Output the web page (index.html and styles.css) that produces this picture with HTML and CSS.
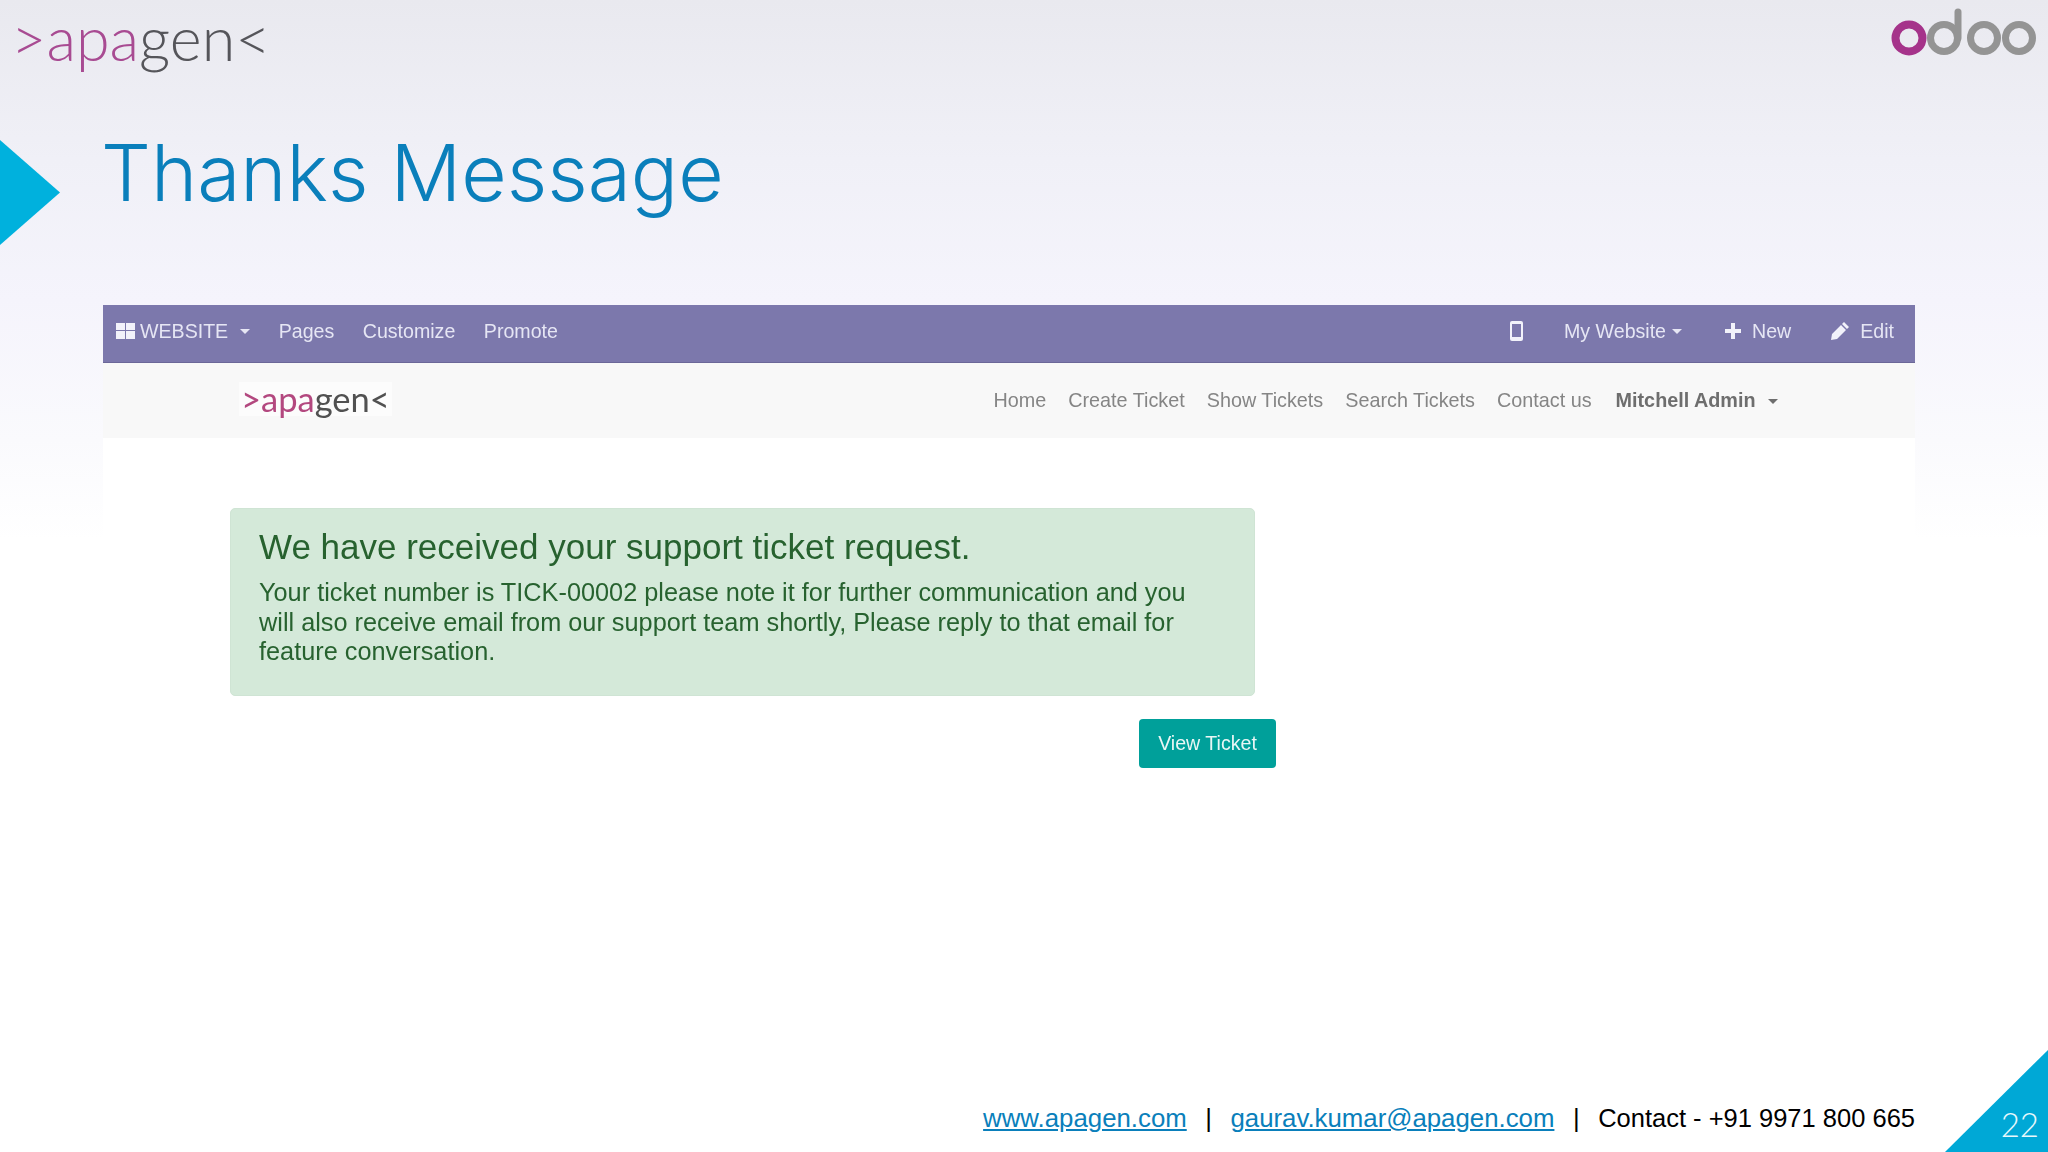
FILE: index.html
```html
<!DOCTYPE html>
<html lang="en">
<head>
  <meta charset="UTF-8" />
  <title>Thanks Message</title>
  <link rel="stylesheet" href="styles.css">
</head>
<body>

  <div class="slide">
    <div class="arrow"></div>

    <div class="top-row">
      <div class="apagen-logo"><span class="pink">&gt;apa</span>gen&lt;</div>
      <svg class="odoo-logo" width="150" height="50" viewBox="0 0 150 50">
        <circle cx="18" cy="30" r="13.5" fill="none" stroke="#a5338a" stroke-width="8" />
        <circle cx="53" cy="30" r="13.5" fill="none" stroke="#949494" stroke-width="7" />
        <line x1="67" y1="4" x2="67" y2="30" stroke="#949494" stroke-width="7" stroke-linecap="round" />
        <circle cx="93" cy="30" r="13.5" fill="none" stroke="#949494" stroke-width="7" />
        <circle cx="128" cy="30" r="13.5" fill="none" stroke="#949494" stroke-width="7" />
      </svg>
    </div>

    <h1 class="slide-title">Thanks Message</h1>

    <div class="screenshot">
      <div class="edit-bar">
        <div class="bar-left">
          <span class="bar-item brand">
            <svg width="19" height="16" viewBox="0 0 19 16"><path d="M0 0h9v7H0zM10 0h9v7h-9zM0 8h9v8H0zM10 8h9v8h-9z" fill="#f2f2fa" /></svg>
            <span>WEBSITE</span>
            <i class="caret"></i>
          </span>
          <span class="bar-item">Pages</span>
          <span class="bar-item">Customize</span>
          <span class="bar-item">Promote</span>
        </div>
        <div class="bar-right">
          <svg class="mobile-icon" width="13" height="20" viewBox="0 0 13 20"><path fill-rule="evenodd" d="M2 0h9a2 2 0 0 1 2 2v16a2 2 0 0 1-2 2H2a2 2 0 0 1-2-2V2a2 2 0 0 1 2-2zM2 3v13h9V3z" fill="#f2f2fa" /></svg>
          <span class="bar-item site">
            <span>My Website</span>
            <i class="caret"></i>
          </span>
          <span class="bar-item new">
            <svg width="16" height="16" viewBox="0 0 16 16"><path d="M6 0h4v6h6v4h-6v6H6v-6H0V6h6z" fill="#f2f2fa" /></svg>
            <span>New</span>
          </span>
          <span class="bar-item edit">
            <svg width="18" height="18" viewBox="0 0 18 18"><path d="M13 0l5 5-2 2-5-5zM10 3l5 5-9 9-6 1 1-6z" fill="#f2f2fa" /></svg>
            <span>Edit</span>
          </span>
        </div>
      </div>

      <div class="site-nav">
        <div class="site-logo"><span class="pink">&gt;apa</span>gen&lt;</div>
        <div class="nav-links">
          <a>Home</a>
          <a>Create Ticket</a>
          <a>Show Tickets</a>
          <a>Search Tickets</a>
          <a>Contact us</a>
          <a class="user">Mitchell Admin <i class="caret"></i></a>
        </div>
      </div>

      <div class="page-body">
        <div class="alert-box">
          <h2>We have received your support ticket request.</h2>
          <p>Your ticket number is TICK-00002 please note it for further communication and you will also receive email from our support team shortly, Please reply to that email for feature conversation.</p>
        </div>
        <div class="btn-row">
          <button class="view-btn">View Ticket</button>
        </div>
      </div>
    </div>

    <div class="contact-row">
      <a>www.apagen.com</a>
      <span class="sep">|</span>
      <a>gaurav.kumar@apagen.com</a>
      <span class="sep">|</span>
      <span class="phone">Contact - +91 9971 800 665</span>
    </div>

    <div class="corner"></div>
    <div class="page-num">22</div>
  </div>

</body>
</html>
```

FILE: styles.css
```css
body {
  margin: 0;
  font-family: "Liberation Sans", Arial, sans-serif;
  overflow: hidden;
}

.slide {
  position: relative;
  width: 2048px;
  height: 1152px;
  overflow: hidden;
  display: flex;
  flex-direction: column;
  background: linear-gradient(#e9e9ef 0px, #f0f0f7 160px, #f5f4fc 300px, #fafafd 440px, #ffffff 540px);
}

.arrow {
  position: absolute;
  left: 0;
  top: 140px;
  width: 60px;
  height: 105px;
  background-color: #00b1dd;
  clip-path: polygon(0 0, 100% 50%, 0 100%);
}

.top-row {
  display: flex;
  justify-content: space-between;
  height: 81px;
  padding: 0 7px 0 11px;
}

.apagen-logo {
  margin-top: -2px;
  font-family: Lato, sans-serif;
  font-weight: 300;
  font-size: 61px;
  line-height: 80px;
  color: #55555a;
}

.pink {
  color: #a84b92;
}

.odoo-logo {
  margin-top: 8px;
}

.slide-title {
  margin: 44px 0 0 101px;
  font-family: Inter, sans-serif;
  font-weight: 300;
  font-size: 78.5px;
  line-height: 96px;
  color: #0a7fbb;
}

.screenshot {
  margin: 84px 133px 0 103px;
  display: flex;
  flex-direction: column;
  filter: blur(0.5px);
}

.edit-bar {
  display: flex;
  justify-content: space-between;
  height: 58px;
  padding-top: 14px;
  box-sizing: border-box;
  background-color: #7c78ac;
  border-bottom: 1px solid #6b6798;
  color: #e6e6f4;
  font-size: 19.6px;
  line-height: 24px;
}

.bar-left,
.bar-right {
  display: flex;
  align-items: center;
  height: 24px;
}

.bar-left {
  padding-left: 13px;
  gap: 28.5px;
}

.bar-right {
  padding-right: 21px;
}

.bar-item {
  display: flex;
  align-items: center;
  gap: 5px;
}

.caret {
  display: inline-block;
  width: 0;
  height: 0;
  border-left: 5px solid transparent;
  border-right: 5px solid transparent;
  border-top: 5px solid currentColor;
}

.brand .caret {
  margin-left: 7px;
}

.site {
  margin-left: 41px;
  gap: 6px;
}

.new {
  margin-left: 43px;
  gap: 11px;
}

.edit {
  margin-left: 40px;
  gap: 11px;
}

.site-nav {
  display: flex;
  align-items: center;
  justify-content: space-between;
  height: 75px;
  padding: 0 137px 0 136px;
  background-color: #f8f8f8;
}

.site-logo {
  margin-bottom: 4px;
  padding: 0 2px;
  background-color: #fcfcfc;
  font-family: Lato, sans-serif;
  font-weight: 400;
  font-size: 34.5px;
  line-height: 34px;
  color: #515151;
}

.site-logo .pink {
  color: #b3487f;
}

.nav-links {
  display: flex;
  align-items: center;
  gap: 22px;
  font-size: 19.8px;
  color: #858585;
}

.user {
  margin-left: 2px;
  font-weight: bold;
  color: #6e6e6e;
}

.user .caret {
  margin-left: 7px;
  vertical-align: middle;
}

.page-body {
  padding: 70px 0 0 127px;
  background-color: #ffffff;
}

.alert-box {
  width: 1025px;
  height: 188px;
  box-sizing: border-box;
  padding: 16px 28px;
  background-color: #d4e9d9;
  border: 1px solid #cfe4d4;
  border-radius: 5px;
  color: #27622f;
}

.alert-box h2 {
  margin: 0 0 9px;
  font-size: 35px;
  font-weight: normal;
  line-height: 44px;
}

.alert-box p {
  margin: 0;
  font-size: 25.3px;
  line-height: 29.6px;
}

.btn-row {
  display: flex;
  justify-content: flex-end;
  width: 1046px;
  margin-top: 23px;
}

.view-btn {
  width: 137px;
  height: 49px;
  border: none;
  border-radius: 4px;
  background-color: #00a09a;
  color: #e9f6f5;
  font-family: "Liberation Sans", Arial, sans-serif;
  font-size: 19.6px;
}

.contact-row {
  display: flex;
  justify-content: flex-end;
  gap: 18.5px;
  margin: auto 133px 17px 0;
  font-size: 25.8px;
  line-height: 34px;
  color: #000000;
}

.contact-row a {
  color: #0a7fbb;
  text-decoration: underline;
}

.phone {
  font-size: 25.5px;
}

.corner {
  position: absolute;
  right: 0;
  bottom: 0;
  width: 103px;
  height: 102px;
  background-color: #00a8d6;
  clip-path: polygon(100% 0, 100% 100%, 0 100%);
}

.page-num {
  position: absolute;
  right: 9px;
  bottom: 10px;
  font-family: Lato, sans-serif;
  font-weight: 300;
  font-size: 33px;
  line-height: 36px;
  color: #e8f8fc;
}
```
